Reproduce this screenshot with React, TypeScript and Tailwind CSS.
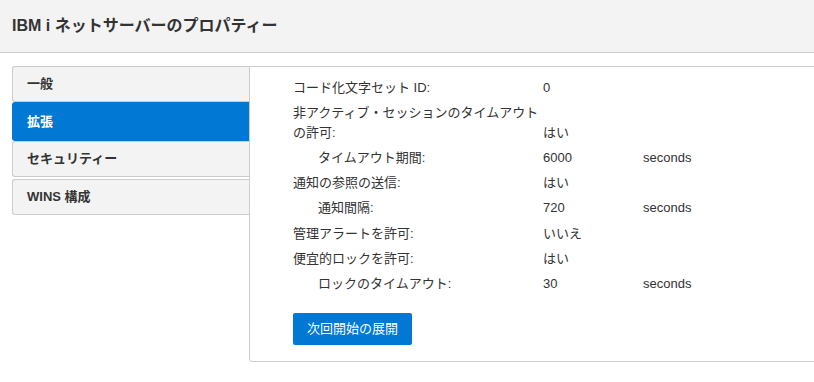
import React from "react";

const font = { fontFamily: '"Liberation Sans", "Noto Sans CJK JP", Arial, sans-serif' };

type Row = { label: React.ReactNode; value?: string; unit?: string; indent?: boolean; multi?: boolean };

const rows: Row[] = [
  { label: "コード化文字セット ID:", value: "0" },
  { label: (<>非アクティブ・セッションのタイムアウト<br />の許可:</>), value: "はい", multi: true },
  { label: "タイムアウト期間:", value: "6000", unit: "seconds", indent: true },
  { label: "通知の参照の送信:", value: "はい" },
  { label: "通知間隔:", value: "720", unit: "seconds", indent: true },
  { label: "管理アラートを許可:", value: "いいえ" },
  { label: "便宜的ロックを許可:", value: "はい" },
  { label: "ロックのタイムアウト:", value: "30", unit: "seconds", indent: true },
];

export default function App() {
  return (
    <div className="w-[814px] h-[382px] overflow-hidden bg-white text-[#333]" style={font}>
      <div className="h-[53px] bg-[#f3f3f3] border-b border-[#cccccc] flex items-center pl-[12px]">
        <h1 className="text-[16px] font-bold leading-[20px] text-[#333]">IBM i ネットサーバーのプロパティー</h1>
      </div>
      <div className="flex pl-[12px] pt-[13px]">
        <div className="w-[237px] shrink-0 flex flex-col">
          <div className="h-[36px] bg-[#f3f3f3] border border-[#cccccc] border-r-0 rounded-l-[3px] flex items-center pl-[14px] text-[13px] font-bold">一般</div>
          <div className="h-[39px] bg-[#0078d4] rounded-l-[3px] flex items-center pl-[15px] text-[13px] font-bold text-white">拡張</div>
          <div className="h-[36px] bg-[#f3f3f3] border border-[#cccccc] border-r-0 rounded-l-[3px] flex items-center pl-[14px] text-[13px] font-bold">セキュリティー</div>
          <div className="mt-[2px] h-[36px] bg-[#f3f3f3] border border-[#cccccc] border-r-0 rounded-l-[3px] flex items-center pl-[14px] text-[13px] font-bold">WINS 構成</div>
        </div>
        <div className="w-[600px] shrink-0 border border-[#cccccc] rounded-b-[3px] rounded-tr-[3px] pl-[43px] pt-[8px] pb-[16px]">
          {rows.map((r, i) => (
            <div key={i} className="flex items-end text-[13px] leading-[20px] py-[2.6px]">
              <div className={r.indent ? "w-[250px] shrink-0 pl-[25px]" : "w-[250px] shrink-0"}>{r.label}</div>
              <div className="w-[100px] shrink-0">{r.value}</div>
              <div>{r.unit}</div>
            </div>
          ))}
          <button className="mt-[16px] h-[32px] px-[14px] bg-[#0078d4] text-white text-[13px] rounded-[2px]">次回開始の展開</button>
        </div>
      </div>
    </div>
  );
}
